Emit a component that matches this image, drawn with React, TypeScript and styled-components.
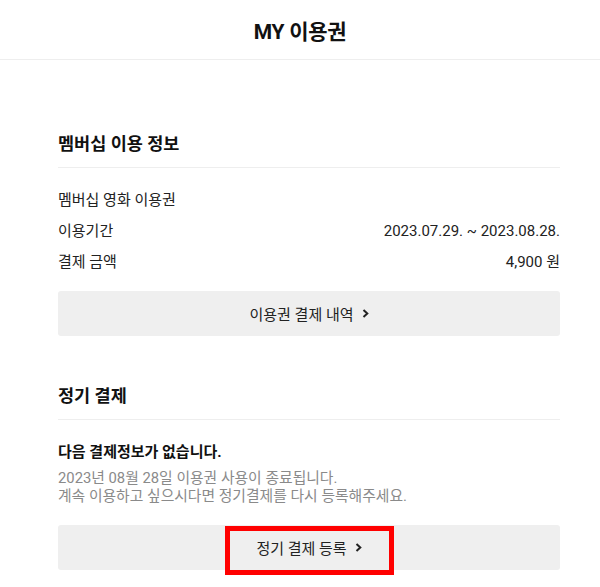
import styled, { createGlobalStyle } from "styled-components";

const GlobalStyle = createGlobalStyle`
  html, body {
    margin: 0;
    padding: 0;
    background: #fff;
  }
  body {
    font-family: Roboto, "Noto Sans CJK KR", sans-serif;
    color: #222;
  }
`;

const Page = styled.div`
  width: 600px;
  min-height: 587px;
`;

const Header = styled.header`
  height: 59px;
  display: flex;
  align-items: center;
  justify-content: center;
  border-bottom: 1px solid #eeeeee;
`;

const Title = styled.h1`
  margin: 0;
  font-size: 21px;
  font-weight: 700;
  color: #111;
  letter-spacing: -0.3px;
`;

const Content = styled.main`
  padding: 72px 40px 12px 58px;
`;

const Section = styled.section<{ $gap?: number }>`
  margin-bottom: ${(p) => p.$gap ?? 0}px;
`;

const SectionTitle = styled.h2`
  margin: 0;
  font-size: 17.5px;
  line-height: 24px;
  font-weight: 700;
  color: #111;
  padding-bottom: 11px;
  border-bottom: 1px solid #eeeeee;
`;

const Rows = styled.div`
  display: flex;
  flex-direction: column;
  gap: 9px;
  padding-top: 21px;
`;

const Row = styled.div`
  display: flex;
  justify-content: space-between;
  align-items: center;
  font-size: 15px;
  line-height: 22px;
  color: #222;
`;

const ActionButton = styled.div<{ $top: number }>`
  position: relative;
  height: 45px;
  margin-top: ${(p) => p.$top}px;
  border-radius: 3px;
  background: #efefef;
  display: flex;
  align-items: center;
  justify-content: center;
  gap: 8px;
  font-size: 15px;
  color: #222;
  cursor: pointer;
`;

const Highlight = styled.span`
  position: absolute;
  left: 167px;
  top: 1px;
  width: 169px;
  height: 49px;
  box-sizing: border-box;
  border: 5px solid #ff0000;
  pointer-events: none;
`;

const Notice = styled.p`
  margin: 21px 0 0;
  font-size: 15px;
  line-height: 22px;
  font-weight: 700;
  color: #111;
`;

const SubText = styled.p`
  margin: 6px 0 0;
  font-size: 14.8px;
  line-height: 18px;
  color: #8a8a8a;
`;

const Chevron = () => (
  <svg width="7" height="11" viewBox="0 0 7 11" fill="none">
    <path d="M1.5 2 L5.3 5.5 L1.5 9" stroke="#222" strokeWidth="2" />
  </svg>
);

export default function App() {
  return (
    <Page>
      <GlobalStyle />
      <Header>
        <Title>MY 이용권</Title>
      </Header>
      <Content>
        <Section $gap={48}>
          <SectionTitle>멤버십 이용 정보</SectionTitle>
          <Rows>
            <Row>
              <span>멤버십 영화 이용권</span>
            </Row>
            <Row>
              <span>이용기간</span>
              <span>2023.07.29. ~ 2023.08.28.</span>
            </Row>
            <Row>
              <span>결제 금액</span>
              <span>4,900 원</span>
            </Row>
          </Rows>
          <ActionButton $top={18} role="button">
            이용권 결제 내역 <Chevron />
          </ActionButton>
        </Section>
        <Section>
          <SectionTitle>정기 결제</SectionTitle>
          <Notice>다음 결제정보가 없습니다.</Notice>
          <SubText>
            2023년 08월 28일 이용권 사용이 종료됩니다.
            <br />
            계속 이용하고 싶으시다면 정기결제를 다시 등록해주세요.
          </SubText>
          <ActionButton $top={20} role="button">
            정기 결제 등록 <Chevron />
            <Highlight />
          </ActionButton>
        </Section>
      </Content>
    </Page>
  );
}
